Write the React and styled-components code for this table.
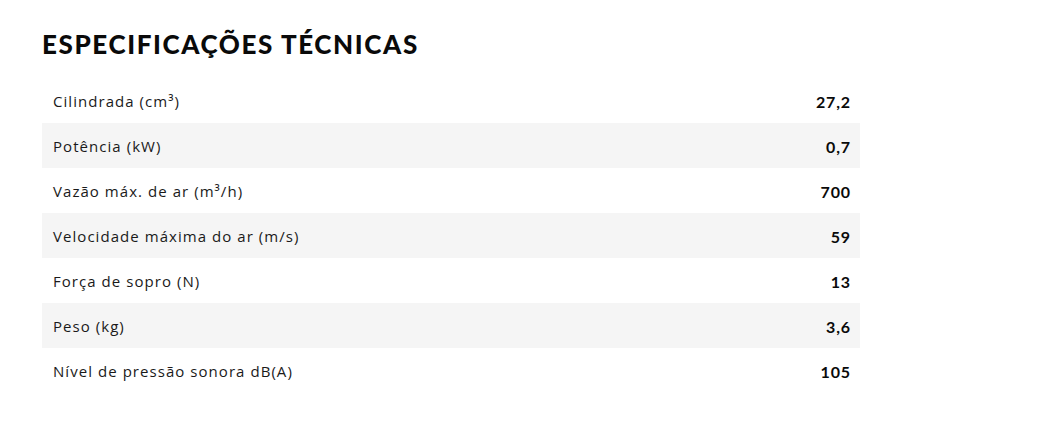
import React from 'react';
import styled, { createGlobalStyle } from 'styled-components';

const GlobalStyle = createGlobalStyle`
  *, *::before, *::after {
    box-sizing: border-box;
  }

  body {
    margin: 0;
    background: #ffffff;
    font-family: Lato, "Noto Sans", sans-serif;
    color: #111111;
  }
`;

const StyledSpecs = styled.section`
  padding: 28px 0 0 42px;
  width: 860px;

  .title {
    margin: 0 0 18px;
    font-size: 26px;
    line-height: 32px;
    font-weight: 900;
    letter-spacing: 1.6px;
    text-transform: uppercase;
    color: #0a0a0a;
  }
`;

const Row = styled.div`
  display: flex;
  justify-content: space-between;
  align-items: center;
  height: 45px;
  padding: 1px 10px 0 11px;
  background: ${(p) => (p.$shaded ? '#f5f5f5' : 'transparent')};
`;

const Label = styled.span`
  font-family: "Open Sans", sans-serif;
  font-size: 15px;
  font-weight: 400;
  letter-spacing: 1.05px;
  color: #1a1a1a;
`;

const Value = styled.span`
  font-size: 16px;
  font-weight: 700;
  letter-spacing: 0.8px;
  margin-right: -0.8px;
  color: #0a0a0a;
`;

const specs = [
  { label: 'Cilindrada (cm³)', value: '27,2' },
  { label: 'Potência (kW)', value: '0,7' },
  { label: 'Vazão máx. de ar (m³/h)', value: '700' },
  { label: 'Velocidade máxima do ar (m/s)', value: '59' },
  { label: 'Força de sopro (N)', value: '13' },
  { label: 'Peso (kg)', value: '3,6' },
  { label: 'Nível de pressão sonora dB(A)', value: '105' },
];

const App = () => {
  return (
    <>
      <GlobalStyle />
      <StyledSpecs>
        <h2 className="title">Especificações técnicas</h2>
        {specs.map((spec, i) => (
          <Row key={spec.label} $shaded={i % 2 === 1}>
            <Label>{spec.label}</Label>
            <Value>{spec.value}</Value>
          </Row>
        ))}
      </StyledSpecs>
    </>
  );
};

export default App;
